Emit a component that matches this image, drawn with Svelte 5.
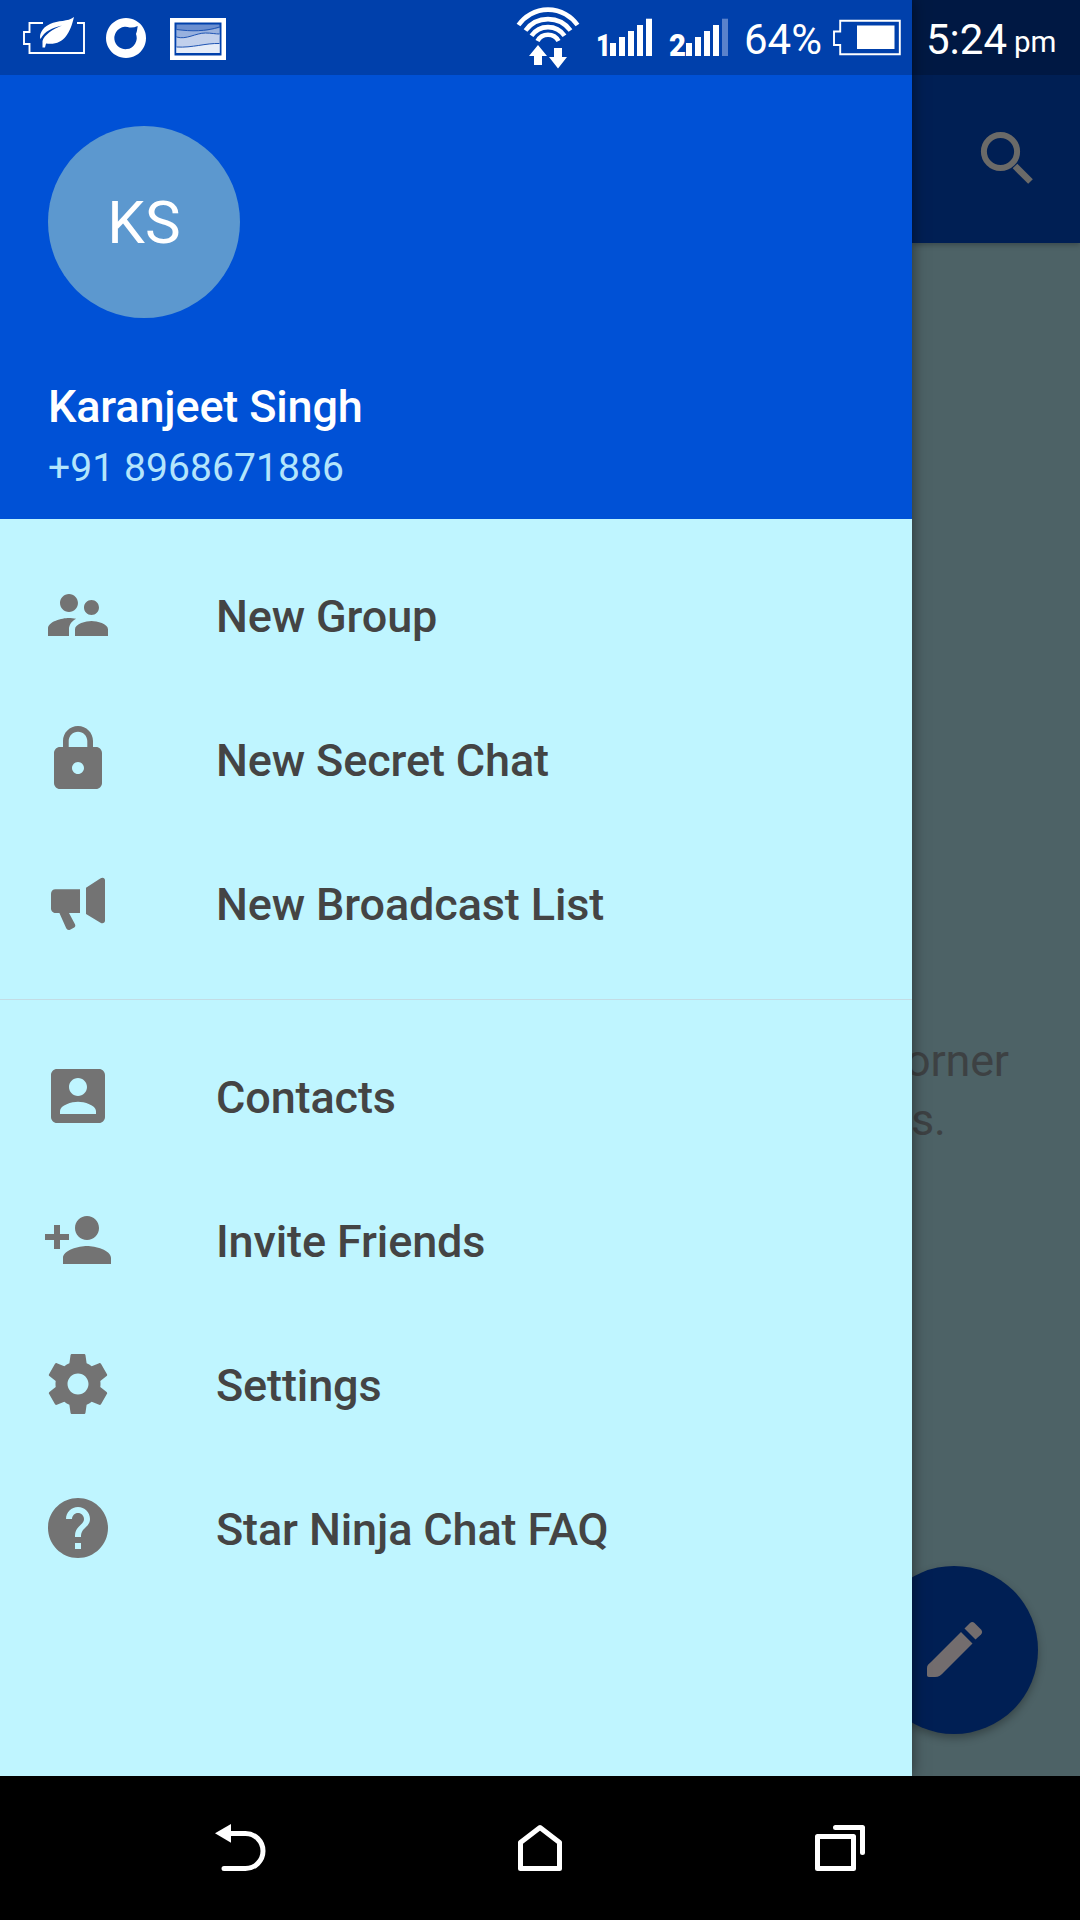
<script lang="ts">
  interface MenuItem {
    label: string;
    path: string;
  }

  const primary: MenuItem[] = [
    {
      label: 'New Group',
      path: 'M16.5 12c1.38 0 2.49-1.12 2.49-2.5S17.88 7 16.5 7C15.12 7 14 8.12 14 9.5s1.12 2.5 2.5 2.5zM9 11c1.66 0 2.99-1.34 2.99-3S10.66 5 9 5C7.34 5 6 6.34 6 8s1.34 3 3 3zm7.5 3c-1.83 0-5.5.92-5.5 2.75V19h11v-2.25c0-1.83-3.67-2.75-5.5-2.75zM9 13c-2.33 0-7 1.17-7 3.5V19h7v-2.25c0-.85.33-2.34 2.37-3.47C10.5 13.1 9.66 13 9 13z'
    },
    {
      label: 'New Secret Chat',
      path: 'M18 8h-1V6c0-2.76-2.24-5-5-5S7 3.24 7 6v2H6c-1.1 0-2 .9-2 2v10c0 1.1.9 2 2 2h12c1.1 0 2-.9 2-2V10c0-1.1-.9-2-2-2zm-6 9c-1.1 0-2-.9-2-2s.9-2 2-2 2 .9 2 2-.9 2-2 2zm3.1-9H8.9V6c0-1.71 1.39-3.1 3.1-3.1 1.71 0 3.1 1.39 3.1 3.1v2z'
    },
    {
      label: 'New Broadcast List',
      path: 'M12.67 7.4H4.5C3.6 7.4 3 8 3 8.9v4.9c0 .9.8 1.53 1.5 1.53h1.3l2.2 4.9c.3.65.8.9 1.35.65l1.4-.75c.4-.25.45-.6.2-1.1L9 15.33h3.67zM14.67 6.9l4.75-3.1c.75-.5 1.58-.25 1.58.6v13.4c0 .85-.8 1.15-1.5.75l-4.83-2.88z'
    }
  ];

  const secondary: MenuItem[] = [
    {
      label: 'Contacts',
      path: 'M3 5v14c0 1.1.89 2 2 2h14c1.1 0 2-.9 2-2V5c0-1.1-.9-2-2-2H5c-1.11 0-2 .9-2 2zm12 4c0 1.66-1.34 3-3 3s-3-1.34-3-3 1.34-3 3-3 3 1.34 3 3zm-9 8c0-2 4-3.1 6-3.1s6 1.1 6 3.1v1H6v-1z'
    },
    {
      label: 'Invite Friends',
      path: 'M15 12c2.21 0 4-1.79 4-4s-1.79-4-4-4-4 1.79-4 4 1.79 4 4 4zm-9-2V7H4v3H1v2h3v3h2v-3h3v-2H6zm9 4c-2.67 0-8 1.34-8 4v2h16v-2c0-2.66-5.33-4-8-4z'
    },
    {
      label: 'Settings',
      path: 'M19.43 12.98c.04-.32.07-.64.07-.98s-.03-.66-.07-.98l2.11-1.65c.19-.15.24-.42.12-.64l-2-3.46c-.12-.22-.39-.3-.61-.22l-2.49 1c-.52-.4-1.08-.73-1.69-.98l-.38-2.65C14.46 2.18 14.25 2 14 2h-4c-.25 0-.46.18-.49.42l-.38 2.65c-.61.25-1.17.59-1.69.98l-2.49-1c-.23-.09-.49 0-.61.22l-2 3.46c-.13.22-.07.49.12.64l2.11 1.65c-.04.32-.07.65-.07.98s.03.66.07.98l-2.11 1.65c-.19.15-.24.42-.12.64l2 3.46c.12.22.39.3.61.22l2.49-1c.52.4 1.08.73 1.69.98l.38 2.65c.03.24.24.42.49.42h4c.25 0 .46-.18.49-.42l.38-2.65c.61-.25 1.17-.59 1.69-.98l2.49 1c.23.09.49 0 .61-.22l2-3.46c.12-.22.07-.49-.12-.64l-2.11-1.65zM12 15.5c-1.93 0-3.5-1.57-3.5-3.5s1.57-3.5 3.5-3.5 3.5 1.57 3.5 3.5-1.57 3.5-3.5 3.5z'
    },
    {
      label: 'Star Ninja Chat FAQ',
      path: 'M12 2C6.48 2 2 6.48 2 12s4.48 10 10 10 10-4.48 10-10S17.52 2 12 2zm1 17h-2v-2h2v2zm2.07-7.75l-.9.92C13.45 12.9 13 13.5 13 15h-2v-.5c0-1.1.45-2.1 1.17-2.83l1.24-1.26c.37-.36.59-.86.59-1.41 0-1.1-.9-2-2-2s-2 .9-2 2H8c0-2.21 1.79-4 4-4s4 1.79 4 4c0 .88-.36 1.68-.93 2.25z'
    }
  ];

  // Signal strength per SIM, out of five bars
  const sims = [
    { slot: '1', level: 5, digitX: 6, digitWidth: 15 },
    { slot: '2', level: 4, digitX: 9, digitWidth: 17 }
  ];
  const barTops = [43, 37, 31, 25, 18.7];
</script>

{#snippet menuRow(item: MenuItem)}
  <li class="row">
    <svg class="row-icon" viewBox="0 0 24 24"><path d={item.path} /></svg>
    <span>{item.label}</span>
  </li>
{/snippet}

<div class="phone">
  <div class="window">
    <aside class="drawer">
      <header class="profile">
        <div class="avatar">KS</div>
        <div class="name">Karanjeet Singh</div>
        <div class="number">+91 8968671886</div>
      </header>
      <ul class="menu">
        {#each primary as item}
          {@render menuRow(item)}
        {/each}
        <li class="divider"></li>
        {#each secondary as item}
          {@render menuRow(item)}
        {/each}
      </ul>
    </aside>

    <!-- Chat list, dimmed behind the open drawer -->
    <main class="chats">
      <div class="appbar">
        <svg class="search" width="56" height="56" viewBox="0 0 56 56">
          <circle cx="21.5" cy="21.5" r="16.6" />
          <path class="handle" d="M36 36L51.500 51.500" />
        </svg>
      </div>
      <p class="hint">orner<br /><span>s.</span></p>
      <div class="fab">
        <svg width="56" height="57" viewBox="0 0 56 57">
          <path d="M34 11L45.500 22.500L17 51C14.500 54 11.500 56 8 56H2C.6 56 0 55 0 54V47C0 44.500 1.500 43 4 41z" />
          <path d="M37.500 7.500L43 2C44.500 .5 46 .5 47.500 2L54 8.500C55.500 10 55.500 12 54 13.500L48.500 18.500z" />
        </svg>
      </div>
    </main>
  </div>

  <div class="statusbar">
    <svg width="70" height="75" viewBox="0 0 70 75">
      <path class="line" d="M23 23H9.500v9H4v12h5.500v9h54.500V23H57" />
      <path
        class="solid"
        d="M54 17C48 22 38 20 30 24C21 28 19 36 20.500 39C25 31 32 28 42 25.500C33 29 24 35 22.500 41L22.500 47.500H25L26 43.500C43 46 50 34 54 17z"
      />
    </svg>
    <svg width="70" height="75" viewBox="0 0 70 75">
      <path
        class="solid"
        fill-rule="evenodd"
        d="M36 18a20 20 0 1 0 .01 0zM47.700 26Q47.200 31 46 34A11.200 11.200 0 1 1 39.500 27.500Q43.500 28 47.700 26z"
      />
    </svg>
    <svg width="80" height="75" viewBox="0 0 80 75">
      <path class="solid" fill-rule="evenodd" d="M10 18h56v42H10zM14.500 22.500v33h47v-33z" />
      <path fill="#6b8fd0" d="M16.500 24.500h43v12h-43z" />
      <path fill="#98b1de" d="M16.500 29.500c15 2 29 2 43-1.500v25h-43z" />
      <path fill="#c1d0ec" d="M16.500 37c10 3 19-4 29-4c6 0 10 1 14 1v19h-43z" />
      <path fill="#e5ecf8" d="M16.500 47c16 1 29-4 43-3.500v9.500h-43z" />
      <path class="waves" d="M16.500 29.500c15 2 29 2 43-2.500M16.500 37c10 3 19-4 29-4c6 0 10 1 14 1M16.500 47c16 1 29-4 43-3.500" />
    </svg>

    <div class="system">
      <svg width="80" height="75" viewBox="0 0 80 75">
        <g class="arcs">
          <path d="M8.500 25A36 36 0 0 1 67.500 25" />
          <path d="M15.500 30.500A28 28 0 0 1 60.500 30.500" />
          <path d="M21.500 35.800A20 20 0 0 1 54.500 35.800" />
          <path d="M27.500 41A12 12 0 0 1 48.500 41" />
        </g>
        <path class="solid" d="M28 45L37 56H32V65H24V56H19zM44 48H52V57H57L48 68.500L39 57H44z" />
      </svg>
      {#each sims as sim}
        <svg width={sim.slot === '1' ? 70 : 80} height="75">
          <text x={sim.digitX} y="56" textLength={sim.digitWidth} lengthAdjust="spacingAndGlyphs">{sim.slot}</text>
          {#each barTops as top, i}
            <rect
              class="bar"
              class:off={i >= sim.level}
              x={(sim.slot === '1' ? 20 : 26) + i * 9}
              y={top}
              width="6"
              height={56 - top}
            />
          {/each}
        </svg>
      {/each}
      <span class="percent">64%</span>
      <svg width="80" height="75" viewBox="0 0 80 75">
        <path class="line" d="M12.200 20.700H71.800V54.300H12.200V45H6V31.500H12.200z" />
        <path class="solid" d="M29 25.500h37.500V49H29z" />
      </svg>
      <span class="time">5:24</span>
      <span class="meridiem">pm</span>
    </div>
  </div>

  <nav class="navbar">
    <svg width="60" height="60" viewBox="0 0 60 60">
      <path class="key" d="M20 15.500H35.500A17.500 17.500 0 0 1 35.500 50.500H14" />
      <path class="solid" d="M5 15.300L21 6V24.700z" />
    </svg>
    <svg width="60" height="60" viewBox="0 0 60 60">
      <path class="key" d="M10.500 24.500L30 9.500L49.500 24.500V50.500H10.500z" />
    </svg>
    <svg width="60" height="60" viewBox="0 0 60 60">
      <path class="key" d="M7.500 18.500H43.500V50.500H7.500zM25.500 9.500H52.500V34.500" />
    </svg>
  </nav>
</div>

<style>
  :global(body) {
    margin: 0;
    background: #000;
  }

  .phone {
    position: relative;
    width: 1080px;
    height: 1920px;
    overflow: hidden;
    font-family: Roboto, sans-serif;
  }

  .window {
    display: grid;
    grid-template-columns: 912px 168px;
    height: 1776px;
    overflow: hidden;
  }

  .drawer {
    z-index: 1;
    background: #bff5ff;
    box-shadow: 0 0 14px rgba(0, 0, 0, 0.5);
  }

  .profile {
    box-sizing: border-box;
    height: 519px;
    padding: 126px 48px 0;
    background: #0051d6;
    color: #fff;
  }

  .avatar {
    width: 192px;
    height: 192px;
    border-radius: 50%;
    background: #5c98cf;
    font-size: 60px;
    line-height: 194px;
    text-align: center;
  }

  .name {
    margin-top: 62px;
    font-size: 45px;
    font-weight: 500;
    letter-spacing: -0.16px;
    line-height: 53px;
  }

  .number {
    margin-top: 12px;
    color: #b3e5fc;
    font-size: 39px;
    letter-spacing: 0.08px;
    line-height: 46px;
  }

  .menu {
    margin: 0;
    padding: 24px 0;
    list-style: none;
  }

  .row {
    display: flex;
    align-items: center;
    height: 144px;
    padding-left: 42px;
    color: #444;
    font-size: 45px;
    font-weight: 500;
    letter-spacing: -0.13px;
  }

  .row span {
    padding-top: 2px;
  }

  .row-icon {
    width: 72px;
    height: 72px;
    margin-right: 102px;
    fill: #737373;
  }

  .divider {
    height: 1px;
    margin: 24px 0;
    background: #c3dce4;
  }

  .chats {
    position: relative;
    background: #4d6266;
  }

  .appbar {
    height: 243px;
    background: #001f54;
    box-shadow: 0 2px 5px rgba(0, 0, 0, 0.25);
  }

  .search {
    display: block;
    padding: 130px 0 0 67px;
    fill: none;
    stroke: #6b6a68;
    stroke-width: 6;
  }

  .search .handle {
    stroke-width: 6.6;
  }

  .hint {
    margin: 788px 0 0 -7px;
    color: #3d4143;
    font-size: 45px;
    letter-spacing: -0.2px;
    line-height: 59px;
  }

  .hint span {
    padding-left: 6px;
  }

  .fab {
    position: absolute;
    top: 1566px;
    right: 42px;
    display: flex;
    align-items: center;
    justify-content: center;
    box-sizing: border-box;
    width: 168px;
    height: 168px;
    padding: 0 0 2px 2px;
    border-radius: 50%;
    background: #001f54;
    box-shadow: 0 4px 9px rgba(0, 0, 0, 0.3);
    fill: #736d6e;
  }

  .statusbar {
    position: absolute;
    top: 0;
    left: 0;
    z-index: 2;
    display: flex;
    box-sizing: border-box;
    width: 1080px;
    height: 75px;
    padding-left: 20px;
    background: rgba(0, 0, 0, 0.2);
    color: #fff;
  }

  .system {
    display: flex;
    width: 570px;
    margin-left: 270px;
    line-height: 79px;
    white-space: nowrap;
  }

  .statusbar svg {
    flex: none;
  }

  .system text {
    fill: #fff;
    font-size: 32px;
    font-weight: 900;
  }

  .percent {
    width: 84px;
    padding-left: 4px;
    font-size: 42px;
  }

  .time {
    padding-left: 18px;
    font-size: 42px;
  }

  .meridiem {
    padding: 3px 0 0 7px;
    font-size: 29.5px;
  }

  .line,
  .waves,
  .arcs,
  .key {
    fill: none;
    stroke: #fff;
  }

  .line {
    stroke-width: 1.9;
  }

  .waves {
    stroke: #1f55b4;
    stroke-width: 1;
  }

  .arcs {
    stroke-width: 4.6;
  }

  .key {
    stroke-width: 5;
    stroke-linecap: round;
    stroke-linejoin: round;
  }

  .solid,
  .bar {
    fill: #fff;
  }

  .bar.off {
    fill: #5a82cb;
  }

  .navbar {
    display: flex;
    align-items: center;
    justify-content: space-around;
    height: 144px;
    padding: 0 90px;
    background: #000;
  }
</style>
